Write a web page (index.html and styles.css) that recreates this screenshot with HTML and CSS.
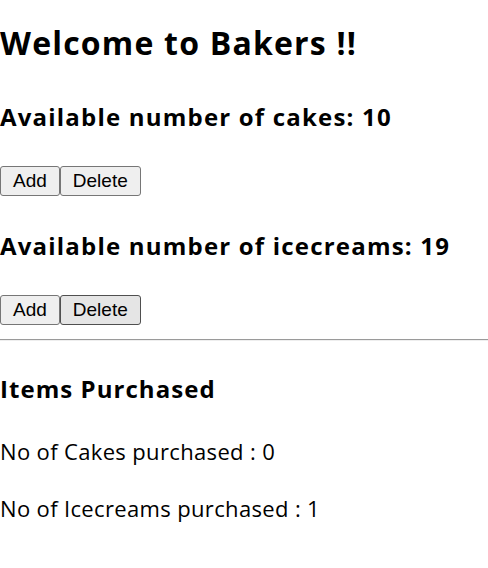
FILE: index.html
```html
<!DOCTYPE html>
<html>
<head>
<meta charset="utf-8">
<title>Bakers</title>
<link rel="stylesheet" href="styles.css">
</head>
<body>
<h1 class="title">Welcome to Bakers !!</h1>
<section class="stock">
  <h2 class="heading heading-cakes">Available number of cakes: 10</h2>
  <div class="actions"><button class="btn">Add</button><button class="btn">Delete</button></div>
</section>
<section class="stock">
  <h2 class="heading">Available number of icecreams: 19</h2>
  <div class="actions"><button class="btn">Add</button><button class="btn btn-hover">Delete</button></div>
</section>
<hr class="divider">
<section class="purchased">
  <h2 class="heading heading-items">Items Purchased</h2>
  <p class="line line-first">No of Cakes purchased : 0</p>
  <p class="line">No of Icecreams purchased : 1</p>
</section>
</body>
</html>
```

FILE: styles.css
```css
html, body {
  margin: 0;
  padding: 0;
  background: #ffffff;
}
body {
  font-family: "Open Sans", Lato, sans-serif;
  color: #000000;
}
.title {
  margin: 23px 0 0 0;
  font-size: 32px;
  line-height: 40px;
  font-weight: 700;
  letter-spacing: 1.2px;
}
.heading {
  margin: 35px 0 0 0;
  font-size: 24px;
  line-height: 30px;
  font-weight: 700;
  letter-spacing: 1.2px;
}
.heading-cakes {
  margin-top: 39px;
}
.heading-items {
  margin-top: 33px;
  letter-spacing: 1.05px;
}
.actions {
  display: flex;
  margin-top: 34px;
}
.btn {
  font-family: "Liberation Sans", Arial, sans-serif;
  font-size: 19px;
  line-height: 22px;
  padding: 3px 12px;
  margin: 0;
  border: 1px solid #767676;
  border-radius: 3px;
  background: #efefef;
  color: #000000;
  letter-spacing: 0;
}
.btn-hover {
  background: #e5e5e5;
  border-color: #4f4f4f;
}
.divider {
  margin: 14px 0 0 0;
  height: 0;
  border: 0;
  border-top: 1px solid #9a9a9a;
  border-bottom: 1px solid #eeeeee;
}
.line {
  margin: 29px 0 0 0;
  font-size: 22px;
  line-height: 28px;
  letter-spacing: 0.35px;
}
.line-first {
  margin-top: 33px;
}
```
